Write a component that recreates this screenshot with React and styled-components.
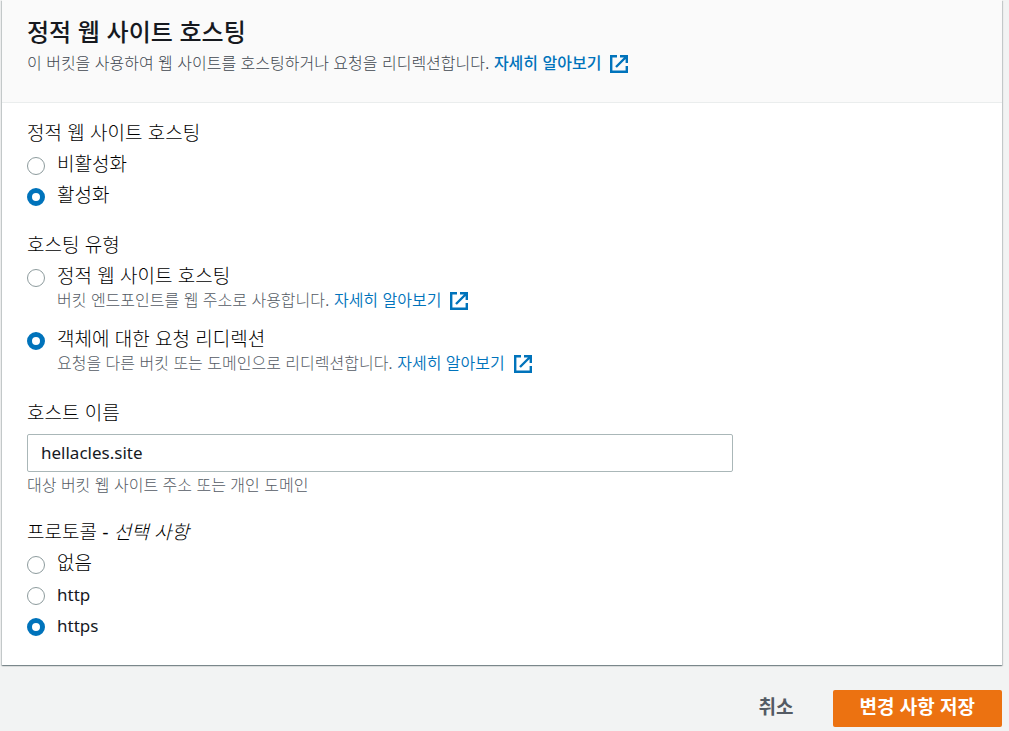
import { useState } from "react";
import styled, { createGlobalStyle } from "styled-components";

const GlobalStyle = createGlobalStyle`
  * {
    box-sizing: border-box;
  }
  body {
    margin: 0;
    background-color: #f2f3f3;
    color: #16191f;
    font-family: "Liberation Sans", "Noto Sans CJK KR", sans-serif;
    font-size: 19px;
    font-weight: 300;
    line-height: 24px;
  }
`;

const Page = styled.main`
  padding: 0 7px 0 2px;
`;

const Panel = styled.section`
  background-color: #fff;
  box-shadow:
    0 1px 1px 0 rgba(0, 28, 36, 0.3),
    1px 1px 1px 0 rgba(0, 28, 36, 0.15),
    -1px 1px 1px 0 rgba(0, 28, 36, 0.15);
`;

const PanelHeader = styled.header`
  padding: 18px 25px 26px;
  background-color: #fafafa;
  border-bottom: 1px solid #eaeded;
`;

const Title = styled.h2`
  margin: 0 0 4px;
  font-size: 24px;
  font-weight: 500;
  line-height: 30px;
`;

const Description = styled.p`
  margin: 0;
  color: ${(props) => (props.$dark ? "#414750" : "#545b64")};
  font-size: 16px;
  line-height: 24px;
`;

const PanelBody = styled.div`
  display: flex;
  flex-direction: column;
  gap: 26px;
  padding: 19px 25px 27px;
`;

const Fieldset = styled.fieldset`
  min-width: 0;
  margin: 0;
  padding: 0;
  border: 0;
`;

const Legend = styled.legend`
  margin-bottom: 7px;
  padding: 0;
  color: #000;
`;

const Options = styled.div`
  display: flex;
  flex-direction: column;
  gap: ${(props) => props.$gap}px;
`;

const Option = styled.div`
  display: grid;
  grid-template-columns: 18px 1fr;
  column-gap: 12px;
`;

const OptionLabel = styled.label`
  color: ${(props) => (props.$latin ? "#16191f" : "#000")};
  font-family: ${(props) => (props.$latin ? '"Noto Sans", sans-serif' : "inherit")};
  font-size: ${(props) => (props.$latin ? 17 : 19)}px;
  font-weight: ${(props) => (props.$latin ? 400 : 300)};
`;

const OptionText = styled.div`
  grid-column: 2;
`;

const Radio = styled.input`
  appearance: none;
  width: 18px;
  height: 18px;
  margin: 4px 0 0;
  border: 1px solid #8d9b9d;
  border-radius: 50%;
  background-color: #fff;

  &:checked {
    border: 5px solid #0073bb;
  }
`;

const FormField = styled.div`
  display: flex;
  flex-direction: column;
`;

const FieldLabel = styled.label`
  margin-bottom: 8px;
  color: #000;
`;

const TextInput = styled.input`
  width: calc(75% - 7px);
  height: 38px;
  padding: 0 13px 2px;
  border: 1px solid #aab7b8;
  border-radius: 2px;
  background-color: #fff;
  color: #16191f;
  font-family: "Noto Sans", sans-serif;
  font-size: 17px;
`;

const Hint = styled.p`
  margin: 5px 0 0;
  color: #545b64;
  font-size: 16px;
  line-height: 18px;
`;

const Link = styled.a`
  color: #0073bb;
  font-weight: ${(props) => (props.$strong ? 500 : 350)};
  text-decoration: none;
`;

const Icon = styled.svg`
  width: 18px;
  height: 18px;
  margin-left: 9px;
  vertical-align: -4px;
`;

const Actions = styled.div`
  display: flex;
  justify-content: flex-end;
  gap: 12px;
  padding-top: 25px;
`;

const Button = styled.button`
  height: 37px;
  padding: 0 27px 6px;
  border: 0;
  border-radius: 2px;
  background-color: ${(props) => (props.$primary ? "#ec7211" : "transparent")};
  color: ${(props) => (props.$primary ? "#fff" : "#545b64")};
  font-family: inherit;
  font-size: 19px;
  font-weight: 700;
  cursor: pointer;
`;

const ExternalLink = ({ strong }) => (
  <Link href="#" $strong={strong}>
    자세히 알아보기
    <Icon viewBox="0 0 18 18" fill="none" stroke="currentColor" strokeWidth="2.4" aria-hidden="true">
      <path d="M7 1.2H1.2v15.6h15.6V11" />
      <path d="M10 1.2h6.8V8M16.5 1.5L6 12" />
    </Icon>
  </Link>
);

const RadioOption = ({ id, name, value, selected, onSelect, label, latin, children }) => (
  <Option>
    <Radio
      type="radio"
      id={id}
      name={name}
      value={value}
      checked={selected === value}
      onChange={() => onSelect(value)}
    />
    <OptionLabel htmlFor={id} $latin={latin}>{label}</OptionLabel>
    {children && (
      <OptionText>
        <Description>{children}</Description>
      </OptionText>
    )}
  </Option>
);

const App = () => {
  const [hosting, setHosting] = useState("enabled");
  const [type, setType] = useState("redirect");
  const [host, setHost] = useState("hellacles.site");
  const [protocol, setProtocol] = useState("https");

  return (
    <>
      <GlobalStyle />
      <Page>
        <Panel>
          <PanelHeader>
            <Title>정적 웹 사이트 호스팅</Title>
            <Description $dark>
              이 버킷을 사용하여 웹 사이트를 호스팅하거나 요청을 리디렉션합니다. <ExternalLink strong />
            </Description>
          </PanelHeader>
          <PanelBody>
            <Fieldset>
              <Legend>정적 웹 사이트 호스팅</Legend>
              <Options $gap={7}>
                <RadioOption id="hosting-off" name="hosting" value="disabled" selected={hosting} onSelect={setHosting} label="비활성화" />
                <RadioOption id="hosting-on" name="hosting" value="enabled" selected={hosting} onSelect={setHosting} label="활성화" />
              </Options>
            </Fieldset>
            <Fieldset>
              <Legend>호스팅 유형</Legend>
              <Options $gap={15}>
                <RadioOption id="type-static" name="type" value="static" selected={type} onSelect={setType} label="정적 웹 사이트 호스팅">
                  버킷 엔드포인트를 웹 주소로 사용합니다. <ExternalLink />
                </RadioOption>
                <RadioOption id="type-redirect" name="type" value="redirect" selected={type} onSelect={setType} label="객체에 대한 요청 리디렉션">
                  요청을 다른 버킷 또는 도메인으로 리디렉션합니다. <ExternalLink />
                </RadioOption>
              </Options>
            </Fieldset>
            <FormField>
              <FieldLabel htmlFor="host">호스트 이름</FieldLabel>
              <TextInput id="host" type="text" value={host} onChange={(e) => setHost(e.target.value)} />
              <Hint>대상 버킷 웹 사이트 주소 또는 개인 도메인</Hint>
            </FormField>
            <Fieldset>
              <Legend>
                프로토콜 - <em>선택 사항</em>
              </Legend>
              <Options $gap={7}>
                <RadioOption id="protocol-none" name="protocol" value="none" selected={protocol} onSelect={setProtocol} label="없음" />
                <RadioOption id="protocol-http" name="protocol" value="http" selected={protocol} onSelect={setProtocol} label="http" latin />
                <RadioOption id="protocol-https" name="protocol" value="https" selected={protocol} onSelect={setProtocol} label="https" latin />
              </Options>
            </Fieldset>
          </PanelBody>
        </Panel>
        <Actions>
          <Button type="button">취소</Button>
          <Button type="submit" $primary>변경 사항 저장</Button>
        </Actions>
      </Page>
    </>
  );
};

export default App;
